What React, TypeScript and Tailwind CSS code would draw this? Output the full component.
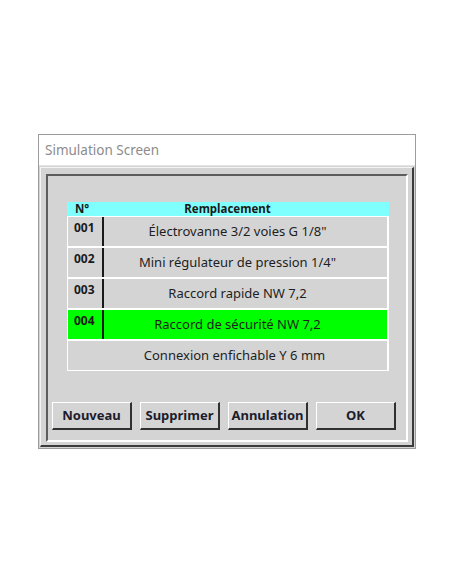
import React from 'react'

type Row = { id: string; label: string; selected?: boolean }

const ROWS: Row[] = [
  { id: '001', label: 'Électrovanne 3/2 voies G 1/8"' },
  { id: '002', label: 'Mini régulateur de pression 1/4"' },
  { id: '003', label: 'Raccord rapide NW 7,2' },
  { id: '004', label: 'Raccord de sécurité NW 7,2', selected: true },
]

const BUTTONS = ['Nouveau', 'Supprimer', 'Annulation', 'OK']

const sans = { fontFamily: '"Noto Sans", "Open Sans", sans-serif' }

export default function App() {
  return (
    <div className="w-[452px] h-[584px] bg-white pt-[134px] pl-[38px]">
      <div className="w-[378px] h-[315px] border border-[#9c9c9c] flex flex-col bg-white">
        {/* title bar */}
        <div
          className="h-[31px] shrink-0 flex items-center pl-[6px] text-[13.5px] text-[#8c8c8c] border-b border-[#e4e4e4]"
          style={sans}
        >
          Simulation Screen
        </div>

        {/* body */}
        <div className="flex-1 min-w-0 bg-[#d4d4d4] p-[1px] flex">
          <div className="flex-1 min-w-0 border-t border-l border-[#f4f4f4] border-r-2 border-b-2 border-r-[#3c3c3c] border-b-[#3c3c3c] pt-[6px] pl-[5px] pr-[4px] pb-[3px] flex">
            <div className="flex-1 min-w-0 border-t-2 border-l-2 border-[#5c5c5c] border-r-2 border-b-2 border-r-white border-b-white pt-[26px] pb-[10px] flex flex-col">
              {/* table */}
              <div className="ml-[19px] w-[322px] flex flex-col">
                <div
                  className="h-[14px] bg-[#80ffff] flex items-center text-[11.5px] font-bold text-[#1a1a1a] leading-none"
                  style={sans}
                >
                  <span className="w-[35px] pl-[8px]">N°</span>
                  <span className="flex-1 text-center pr-[36px]">Remplacement</span>
                </div>
                <div className="bg-white pl-[1px] pr-[2px] pt-[1px] pb-[1px] flex flex-col gap-[2px]">
                  {ROWS.map((r) => (
                    <div
                      key={r.id}
                      className={`h-[29px] flex ${r.selected ? 'bg-[#00ff00]' : 'bg-[#d4d4d4]'}`}
                    >
                      <div
                        className="w-[34px] pt-[4px] pl-[6px] text-[12px] font-bold text-[#1a1a1a] leading-[14px]"
                        style={sans}
                      >
                        {r.id}
                      </div>
                      <div className="w-[2px] bg-[#1a1a1a]" />
                      <div
                        className="flex-1 flex items-center justify-center pr-[16px] text-[13px] text-[#1e1e1e]"
                        style={sans}
                      >
                        {r.label}
                      </div>
                    </div>
                  ))}
                  <div
                    className="h-[29px] bg-[#d4d4d4] flex items-center justify-center pl-[14px] pt-[1px] text-[13px] text-[#1e1e1e]"
                    style={sans}
                  >
                    Connexion enfichable Y 6 mm
                  </div>
                </div>
              </div>

              {/* buttons */}
              <div className="mt-auto flex gap-[8px] pl-[4px]">
                {BUTTONS.map((b) => (
                  <button
                    key={b}
                    type="button"
                    className="w-[80px] h-[28px] shrink-0 bg-[#d4d4d4] border-t border-l border-white border-r-2 border-b-2 border-r-[#303030] border-b-[#303030] text-[13px] font-bold text-[#1c1c2c] flex items-center justify-center"
                    style={sans}
                  >
                    {b}
                  </button>
                ))}
              </div>
            </div>
          </div>
        </div>
      </div>
    </div>
  )
}
